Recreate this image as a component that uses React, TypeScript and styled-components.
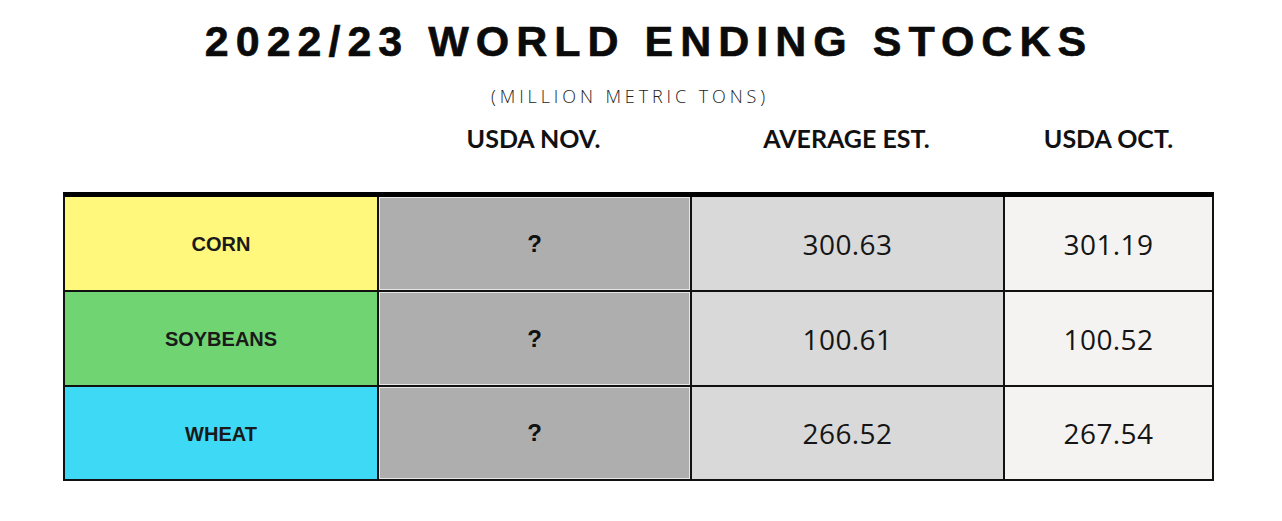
import React from "react";
import styled, { createGlobalStyle } from "styled-components";

const GlobalStyle = createGlobalStyle`
  html, body {
    margin: 0;
    padding: 0;
    background: #ffffff;
  }
`;

const StPage = styled.div`
  width: 1282px;
  height: 521px;
  display: flex;
  flex-direction: column;
  align-items: center;
  background: #ffffff;
  overflow: hidden;
`;

const StTitle = styled.h1`
  margin: 16px 0 0 0;
  padding-left: 16px;
  font-family: "Liberation Sans", Arial, sans-serif;
  font-weight: 700;
  font-size: 43px;
  line-height: 50px;
  letter-spacing: 7px;
  color: #0b0b0b;
  -webkit-text-stroke: 0.6px #0b0b0b;
`;

const StSubtitle = styled.div`
  margin-top: 20px;
  margin-right: 22px;
  font-family: "Open Sans", sans-serif;
  font-weight: 300;
  font-size: 18px;
  line-height: 20px;
  letter-spacing: 3.9px;
  color: #222222;
`;

const StHeaderRow = styled.div`
  display: grid;
  grid-template-columns: 314px 313px 313px 1fr;
  width: 1151px;
  margin-top: 17px;
  margin-right: 5px;
`;

const StHeaderCell = styled.div`
  text-align: center;
  font-family: Lato, sans-serif;
  font-weight: 700;
  font-size: 25px;
  line-height: 30px;
  color: #111111;
`;

const StTable = styled.div`
  display: grid;
  grid-template-columns: 314px 313px 313px 1fr;
  width: 1151px;
  box-sizing: border-box;
  margin-top: 39px;
  margin-right: 5px;
  border: 2px solid #111111;
  border-top: 5px solid #000000;
`;

interface IStCellProps {
  $bg: string;
  $last?: boolean;
  $lastRow?: boolean;
  $inset?: boolean;
}

const StCell = styled.div<IStCellProps>`
  height: ${({ $lastRow }) => ($lastRow ? "92px" : "95px")};
  display: flex;
  align-items: center;
  justify-content: center;
  box-sizing: border-box;
  background-color: ${({ $bg }) => $bg};
  border-right: ${({ $last }) => ($last ? "none" : "2px solid #111111")};
  border-bottom: ${({ $lastRow }) => ($lastRow ? "none" : "2px solid #111111")};
  box-shadow: ${({ $inset }) =>
    $inset ? "inset 1px 1px 0 #e6e6e6, inset -1px -1px 0 #e6e6e6" : "none"};
`;

const StLabel = styled.span`
  font-family: "Liberation Sans", Arial, sans-serif;
  font-weight: 700;
  font-size: 20px;
  color: #1a1a1a;
  margin-top: 2px;
`;

const StQuestion = styled.span`
  font-family: "Liberation Sans", Arial, sans-serif;
  font-weight: 700;
  font-size: 24px;
  color: #111111;
`;

const StValue = styled.span`
  font-family: "Open Sans", sans-serif;
  font-weight: 400;
  font-size: 28px;
  letter-spacing: 0.4px;
  color: #151515;
`;

interface IRow {
  name: string;
  color: string;
  avg: string;
  oct: string;
}

const rows: IRow[] = [
  { name: "CORN", color: "#fff87c", avg: "300.63", oct: "301.19" },
  { name: "SOYBEANS", color: "#71d473", avg: "100.61", oct: "100.52" },
  { name: "WHEAT", color: "#3ed9f5", avg: "266.52", oct: "267.54" },
];

const App = () => {
  return (
    <StPage>
      <GlobalStyle />
      <StTitle>2022/23 WORLD ENDING STOCKS</StTitle>
      <StSubtitle>(MILLION METRIC TONS)</StSubtitle>
      <StHeaderRow>
        <div />
        <StHeaderCell>USDA NOV.</StHeaderCell>
        <StHeaderCell>AVERAGE EST.</StHeaderCell>
        <StHeaderCell>USDA OCT.</StHeaderCell>
      </StHeaderRow>
      <StTable>
        {rows.map((row, i) => {
          const lastRow = i === rows.length - 1;
          return (
            <React.Fragment key={row.name}>
              <StCell $bg={row.color} $lastRow={lastRow}>
                <StLabel>{row.name}</StLabel>
              </StCell>
              <StCell $bg="#aeaeae" $lastRow={lastRow} $inset>
                <StQuestion>?</StQuestion>
              </StCell>
              <StCell $bg="#d9d9d9" $lastRow={lastRow}>
                <StValue>{row.avg}</StValue>
              </StCell>
              <StCell $bg="#f5f3f2" $lastRow={lastRow} $last>
                <StValue>{row.oct}</StValue>
              </StCell>
            </React.Fragment>
          );
        })}
      </StTable>
    </StPage>
  );
};

export default App;
